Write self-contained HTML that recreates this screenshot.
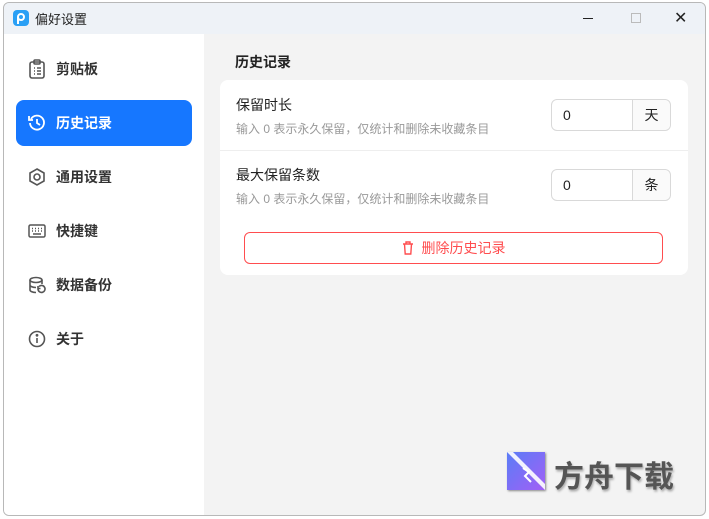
<!DOCTYPE html>
<html><head><meta charset="utf-8"><style>
*{box-sizing:border-box;margin:0;padding:0}
body{width:709px;height:519px;background:#fff;font-family:"Liberation Sans","Noto Sans CJK SC",sans-serif;position:relative;overflow:hidden}
.win{position:absolute;left:3px;top:2px;width:703px;height:514px;border:1px solid #b8b8b8;border-radius:6px;overflow:hidden;background:#f3f3f3}
.title{position:absolute;left:0;top:0;width:100%;height:31px;background:#eef2f7}
.side{position:absolute;left:0;top:31px;width:200px;height:483px;background:#fff}
.item{position:absolute;left:12px;width:176px;height:46px;border-radius:8px;display:flex;align-items:center;padding-left:12px;font-size:14px;font-weight:bold;color:#333}
.item svg{margin-right:10px}
.item.act{background:#1677ff;color:#fff}
.card{position:absolute;left:216px;top:77px;width:468px;height:195px;background:#fff;border-radius:8px}
.lbl{position:absolute;left:16px;font-size:14px;color:#222}
.sub{position:absolute;left:16px;font-size:12px;color:#999}
.inp{position:absolute;left:331px;width:120px;height:32px;border:1px solid #d9d9d9;border-radius:6px;display:flex;font-size:14px;color:#222}
.inp .v{flex:1;padding-left:11px;line-height:30px}
.inp .u{width:38px;border-left:1px solid #d9d9d9;background:#fafafa;text-align:center;line-height:30px;border-radius:0 6px 6px 0}
</style></head><body>
<div class="win">
<div class="title">
<div style="position:absolute;left:9px;top:7px;width:16px;height:16px;background:#2aa0f5;border-radius:4px"><div style="position:absolute;left:4px;top:3px;width:8px;height:8px;border:2px solid #fff;border-radius:50%"></div><div style="position:absolute;left:4px;top:7px;width:2px;height:7px;background:#fff"></div></div>
<div style="position:absolute;left:31px;top:6px;font-size:13px;color:#222">偏好设置</div>
<div style="position:absolute;left:579px;top:15px;width:10px;height:1px;background:#222"></div>
<div style="position:absolute;left:627px;top:10px;width:10px;height:10px;border:1px solid #bbb"></div>
<div style="position:absolute;left:670px;top:5px;font-size:16px;color:#222">✕</div>
</div>
<div class="side">
<div class="item" style="top:12px"><svg width="18" height="20" viewBox="0 0 18 20" fill="none" stroke="#555" stroke-width="1.6"><rect x="2" y="3" width="14" height="16" rx="2"/><rect x="6" y="1" width="6" height="4" rx="1"/><path d="M6 9h1M6 12h1M6 15h1M9 9h4M9 12h4M9 15h4"/></svg>剪贴板</div>
<div class="item act" style="top:66px"><svg width="18" height="18" viewBox="0 0 18 18" fill="none" stroke="#fff" stroke-width="1.8"><path d="M3 5A7 7 0 1 1 2 9"/><path d="M1 2v4h4"/><path d="M9 5v4l3 2"/></svg>历史记录</div>
<div class="item" style="top:120px"><svg width="18" height="18" viewBox="0 0 18 18" fill="none" stroke="#555" stroke-width="1.6"><path d="M9 1l7 4v8l-7 4-7-4V5z"/><circle cx="9" cy="9" r="3"/></svg>通用设置</div>
<div class="item" style="top:174px"><svg width="18" height="14" viewBox="0 0 18 14" fill="none" stroke="#555" stroke-width="1.5"><rect x="1" y="1" width="16" height="12" rx="1.5"/><path d="M4 4.5h1M7 4.5h1M10 4.5h1M13 4.5h1M4 7h1M7 7h1M10 7h1M13 7h1M5 10h8"/></svg>快捷键</div>
<div class="item" style="top:228px"><svg width="18" height="18" viewBox="0 0 18 18" fill="none" stroke="#555" stroke-width="1.6"><ellipse cx="8" cy="4" rx="6" ry="2.5"/><path d="M2 4v10c0 1.4 2.7 2.5 6 2.5M14 4v4M2 9c0 1.4 2.7 2.5 6 2.5"/><path d="M10 13a3.5 3.5 0 1 0 1-2.5M10 10v2.5h2.5"/></svg>数据备份</div>
<div class="item" style="top:282px"><svg width="18" height="18" viewBox="0 0 18 18" fill="none" stroke="#555" stroke-width="1.6"><circle cx="9" cy="9" r="7.5"/><path d="M9 8v5"/><circle cx="9" cy="5.3" r=".6" fill="#555"/></svg>关于</div>
</div>
<div style="position:absolute;left:231px;top:49px;font-size:14px;font-weight:bold;color:#222">历史记录</div>
<div class="card">
<div class="lbl" style="top:15px">保留时长</div>
<div class="sub" style="top:40px">输入 0 表示永久保留，仅统计和删除未收藏条目</div>
<div class="inp" style="top:19px"><div class="v">0</div><div class="u">天</div></div>
<div style="position:absolute;left:0;top:70px;width:100%;height:1px;background:#eee"></div>
<div class="lbl" style="top:85px">最大保留条数</div>
<div class="sub" style="top:110px">输入 0 表示永久保留，仅统计和删除未收藏条目</div>
<div class="inp" style="top:89px"><div class="v">0</div><div class="u">条</div></div>
<div style="position:absolute;left:24px;top:152px;width:419px;height:32px;border:1px solid #ff4d4f;border-radius:6px;display:flex;align-items:center;justify-content:center;color:#ff4d4f;font-size:14px"><svg width="12" height="14" viewBox="0 0 12 14" fill="none" stroke="#ff4d4f" stroke-width="1.4" style="margin-right:8px"><path d="M1 3h10M4 3V1h4v2M2.5 3l.7 10h5.6l.7-10"/></svg>删除历史记录</div>
</div>
<div style="position:absolute;left:503px;top:449px;width:38px;height:38px;background:linear-gradient(135deg,#5a7df7,#a25ff5);box-shadow:1px 1px 2px #888"><svg width="38" height="38"><path d="M0 0h6l32 32v6z" fill="#fff" opacity=".9"/><path d="M16 16l6 4-4 4 6 6" stroke="#fff" stroke-width="2" fill="none"/></svg></div>
<div style="position:absolute;left:550px;top:449px;font-size:30px;font-weight:bold;color:#555;text-shadow:1px 2px 2px #aaa">方舟下载</div>
</div>
</body></html>
